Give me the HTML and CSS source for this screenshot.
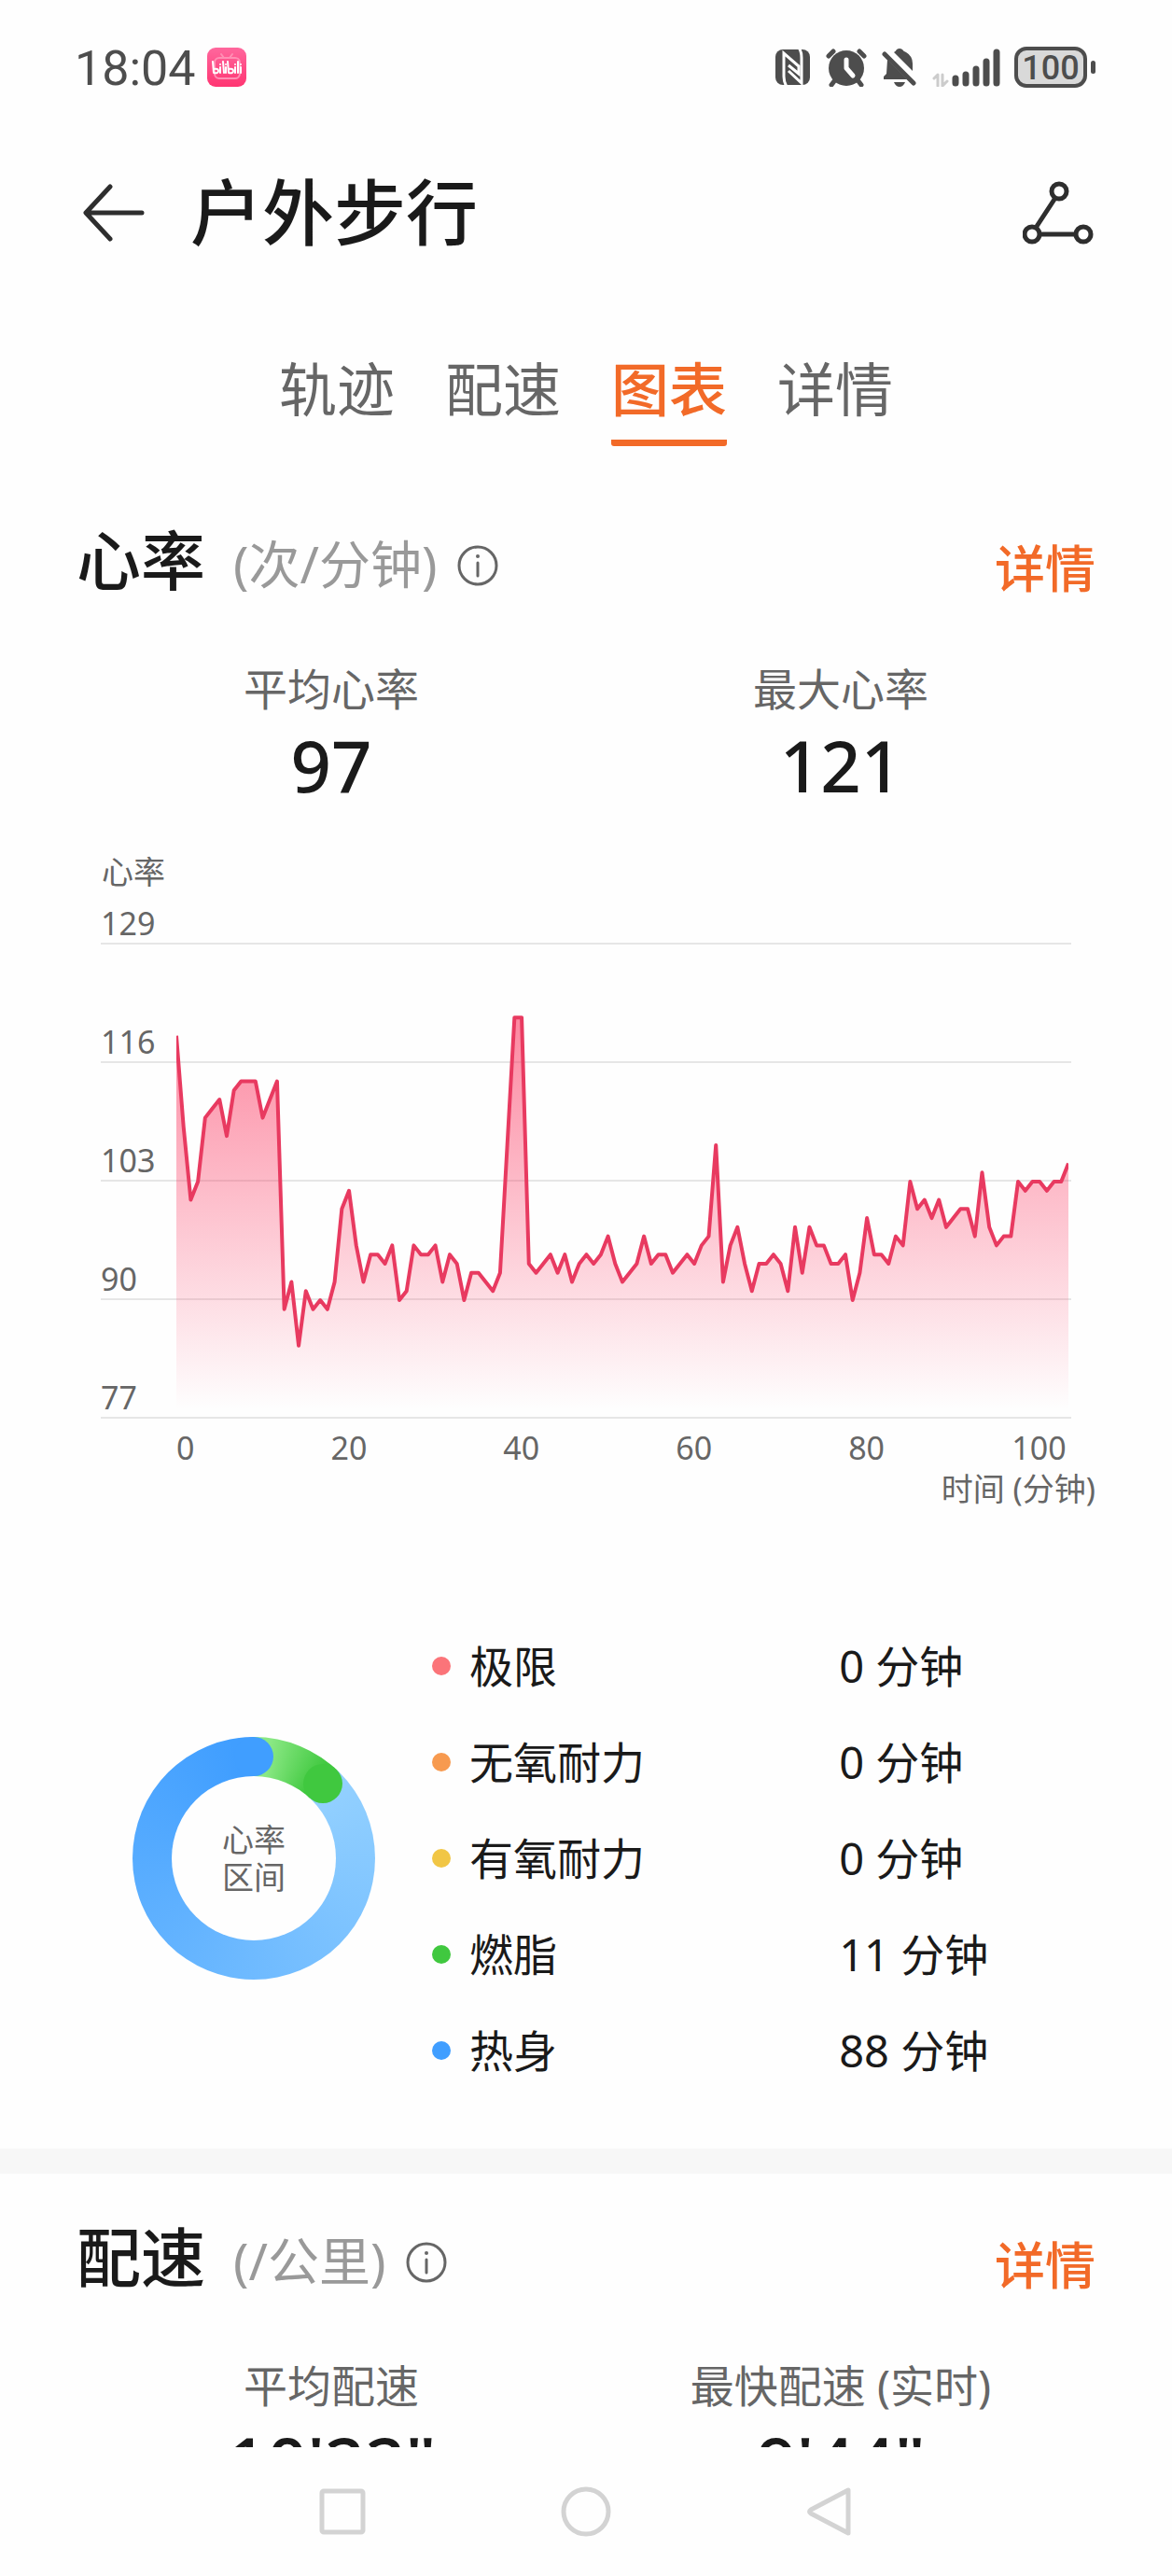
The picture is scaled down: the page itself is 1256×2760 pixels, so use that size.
FILE: index.html
```html
<!DOCTYPE html>
<html lang="zh-CN">
<head>
  <meta charset="UTF-8">
  <meta name="viewport" content="width=device-width, initial-scale=1">
  <title>户外步行</title>
  <link rel="stylesheet" href="styles.css">
</head>
<body>
<div class="screen">

  <!-- Status bar -->
  <div class="status-bar">
    <span class="clock">18:04</span>
    <svg class="app-badge" viewBox="0 0 42 42" width="42" height="42" aria-hidden="true">
      <defs>
        <linearGradient id="badgeFill" x1="0" y1="0" x2="0" y2="1">
          <stop offset="0" stop-color="#ff679d"/>
          <stop offset="1" stop-color="#ff3572"/>
        </linearGradient>
      </defs>
      <rect width="42" height="42" rx="9" fill="url(#badgeFill)"/>
      <g fill="none" stroke="#ff8fb4" stroke-width="2" stroke-linecap="round">
        <rect x="8" y="11" width="27" height="22" rx="5"/>
        <path d="M15 7l3 4M27 7l-3 4"/>
      </g>
      <g fill="none" stroke="#fff" stroke-width="2" stroke-linecap="round" stroke-linejoin="round">
        <path d="M6 15l1 12q5 1 5-2t-5-2M14 21v6M17 15l1 12M20 21v6M22 15l1 12q5 1 5-2t-5-2M30 21v6M33 15v12M36 21v6"/>
        <path d="M14 18v0M20 18v0M30 18v0M36 18v0"/>
      </g>
    </svg>
    <div class="status-icons">
      <svg viewBox="0 0 38 40" width="38" height="40" aria-hidden="true">
        <rect x="0" y="1" width="37" height="38" rx="8" fill="#4d4d4d"/>
        <path d="M12 41Q9 36 9 30V5L25 19V27L14 18" fill="none" stroke="#fff" stroke-width="3"/>
        <path d="M14 24L28 37V10Q28 3 25 -1" fill="none" stroke="#fff" stroke-width="3"/>
      </svg>
      <svg class="icon-alarm" viewBox="0 0 44 42" width="44" height="42" aria-hidden="true">
        <circle cx="22" cy="22" r="19" fill="#4d4d4d"/>
        <path d="M3 9l5-5M41 9l-5-5M9 36l-3 4M35 36l3 4" stroke="#4d4d4d" stroke-width="5" stroke-linecap="round"/>
        <path d="M22 13v9l7 8" fill="none" stroke="#fff" stroke-width="5" stroke-linecap="round" stroke-linejoin="round"/>
      </svg>
      <svg class="icon-bell" viewBox="0 0 38 42" width="38" height="42" aria-hidden="true">
        <path d="M6 13L27 34H2V31L5 28Z" fill="#4d4d4d"/>
        <path d="M13 5Q15 4 16 2Q19 0 22 2Q23 4 26 5Q33 9 33 17V25Z" fill="#4d4d4d"/>
        <path d="M3 7L34 38" stroke="#4d4d4d" stroke-width="5" stroke-linecap="round"/>
        <path d="M13 37H25Q23 42 19 42T13 37Z" fill="#4d4d4d"/>
      </svg>
      <svg class="icon-signal" viewBox="0 0 74 42" width="74" height="42" aria-hidden="true">
        <path d="M2 33l4-4v12M11 29v12l5-5" fill="none" stroke="#ccc" stroke-width="3" stroke-linejoin="round" stroke-linecap="round"/>
        <path d="M25 33v5M36 29v9M47 23v15M58 15v23M69 5v33" stroke="#4d4d4d" stroke-width="7" stroke-linecap="round"/>
      </svg>
      <span class="battery">100</span>
    </div>
  </div>

  <!-- Title bar -->
  <header class="title-bar">
    <button class="icon-button" type="button" aria-label="返回">
      <svg viewBox="0 0 68 64" width="68" height="64">
        <path d="M30 4L4 32L30 60M5 32H64" fill="none" stroke="#2e2e2e" stroke-width="5" stroke-linecap="round" stroke-linejoin="round"/>
      </svg>
    </button>
    <h1>户外步行</h1>
    <button class="icon-button" type="button" aria-label="分享">
      <svg viewBox="0 0 76 68" width="76" height="68">
        <g fill="none" stroke="#2e2e2e" stroke-width="5">
          <circle cx="39" cy="11" r="8"/>
          <circle cx="10" cy="57" r="8"/>
          <circle cx="65" cy="57" r="8"/>
          <path d="M35 18L14 50M18 57H57"/>
        </g>
      </svg>
    </button>
  </header>

  <!-- Tabs -->
  <nav class="tabs">
    <a href="#">轨迹</a>
    <a href="#">配速</a>
    <a href="#" class="active" aria-current="page">图表</a>
    <a href="#">详情</a>
  </nav>

  <main class="content">

    <!-- Heart rate -->
    <section class="card">
      <div class="card-head">
        <h2>心率</h2>
        <span class="unit">(次/分钟)</span>
        <button class="icon-button" type="button" aria-label="说明">
          <svg viewBox="0 0 44 44" width="44" height="44">
            <circle cx="22" cy="22" r="20" fill="none" stroke="#666" stroke-width="3"/>
            <path d="M22 19v14" stroke="#666" stroke-width="3" stroke-linecap="round"/>
            <circle cx="22" cy="12" r="2" fill="#666"/>
          </svg>
        </button>
        <a class="more" href="#">详情</a>
      </div>

      <div class="stats">
        <div class="stat"><span>平均心率</span><strong>97</strong></div>
        <div class="stat"><span>最大心率</span><strong>121</strong></div>
      </div>

      <div class="chart">
        <div class="chart-title">心率</div>
        <div class="plot">
          <div class="grid-row first">129</div>
          <div class="grid-row">116</div>
          <div class="grid-row">103</div>
          <div class="grid-row">90</div>
          <div class="grid-row">77</div>
          <!-- one unit per sample across, one unit per bpm down (129 to 77) -->
          <svg class="plot-line" viewBox="0 0 124 52" preserveAspectRatio="none" aria-hidden="true">
            <defs>
              <linearGradient id="hrFill" gradientUnits="userSpaceOnUse" x1="0" y1="8" x2="0" y2="51">
                <stop offset="0" stop-color="#fb2c57" stop-opacity="0.56"/>
                <stop offset="1" stop-color="#fb2c57" stop-opacity="0"/>
              </linearGradient>
            </defs>
            <polygon id="hrArea" fill="url(#hrFill)"/>
            <polyline id="hrLine"/>
          </svg>
        </div>
        <div class="x-axis">
          <span>0</span><span>20</span><span>40</span><span>60</span><span>80</span><span>100</span>
        </div>
        <div class="x-title">时间 (分钟)</div>
      </div>

      <div class="zones">
        <div class="ring">
          <div class="ring-label">心率<br>区间</div>
        </div>
        <table class="zone-table">
          <tr><th scope="row"><i class="dot extreme"></i>极限</th><td>0 分钟</td></tr>
          <tr><th scope="row"><i class="dot anaerobic"></i>无氧耐力</th><td>0 分钟</td></tr>
          <tr><th scope="row"><i class="dot aerobic"></i>有氧耐力</th><td>0 分钟</td></tr>
          <tr><th scope="row"><i class="dot fat-burn"></i>燃脂</th><td>11 分钟</td></tr>
          <tr><th scope="row"><i class="dot warm-up"></i>热身</th><td>88 分钟</td></tr>
        </table>
      </div>
    </section>

    <!-- Pace -->
    <section class="card">
      <div class="card-head">
        <h2>配速</h2>
        <span class="unit">(/公里)</span>
        <button class="icon-button" type="button" aria-label="说明">
          <svg viewBox="0 0 44 44" width="44" height="44">
            <circle cx="22" cy="22" r="20" fill="none" stroke="#666" stroke-width="3"/>
            <path d="M22 19v14" stroke="#666" stroke-width="3" stroke-linecap="round"/>
            <circle cx="22" cy="12" r="2" fill="#666"/>
          </svg>
        </button>
        <a class="more" href="#">详情</a>
      </div>
      <div class="stats">
        <div class="stat"><span>平均配速</span><strong>10'22"</strong></div>
        <div class="stat"><span>最快配速 (实时)</span><strong>9'44"</strong></div>
      </div>
    </section>
  </main>

  <!-- System navigation -->
  <footer class="system-nav">
    <button class="icon-button" type="button" aria-label="最近任务">
      <svg viewBox="0 0 54 54" width="54" height="54"><rect x="5" y="5" width="44" height="44" rx="2"/></svg>
    </button>
    <button class="icon-button" type="button" aria-label="主屏幕">
      <svg viewBox="0 0 54 54" width="54" height="54"><circle cx="27" cy="27" r="24"/></svg>
    </button>
    <button class="icon-button" type="button" aria-label="返回上一级">
      <svg viewBox="0 0 54 54" width="54" height="54"><path d="M47 4V50L7 29Q4 27 7 25Z"/></svg>
    </button>
  </footer>
</div>

<script>
  const heartRate = [
    119, 109, 101, 103, 110, 111, 112, 108, 113, 114, 114, 114, 110, 112, 114, 89, 92, 85, 91, 89,
    90, 89, 92, 100, 102, 96, 92, 95, 95, 94, 96, 90, 91, 96, 95, 95, 96, 92, 95, 94,
    90, 93, 93, 92, 91, 93, 107, 121, 121, 94, 93, 94, 95, 93, 95, 92, 94, 95, 94, 95,
    97, 94, 92, 93, 94, 97, 94, 95, 95, 93, 94, 95, 94, 96, 97, 107, 92, 96, 98, 94,
    91, 94, 94, 95, 94, 91, 98, 93, 98, 96, 96, 94, 94, 95, 90, 93, 99, 95, 95, 94,
    97, 96, 103, 100, 101, 99, 101, 98, 99, 100, 100, 97, 104, 98, 96, 97, 97, 103, 102, 103,
    103, 102, 103, 103, 105
  ];
  const points = heartRate.map((bpm, i) => `${i},${129 - bpm}`).join(" ");
  document.getElementById("hrLine").setAttribute("points", points);
  document.getElementById("hrArea").setAttribute("points", `0,52 ${points} 124,52`);
</script>
</body>
</html>
```
FILE: styles.css
```css
* {
  box-sizing: border-box;
}
body {
  margin: 0;
  font-family: "Noto Sans", "Noto Sans CJK SC", sans-serif;
  background: #fefefe;
  color: #1a1a1a;
}
a {
  text-decoration: none;
}
svg {
  display: block;
}
.icon-button {
  padding: 0;
  border: 0;
  background: none;
}

/* The page fills the window, the content is cut off by the system bar */
.screen {
  display: flex;
  flex-direction: column;
  height: 100vh;
}

/* Status bar */
.status-bar {
  display: flex;
  align-items: center;
  height: 144px;
  padding: 0 82px 0 80px;
  color: #4d4d4d;
}
.clock {
  padding-top: 4px;
  font-family: Roboto, sans-serif;
  font-size: 52px;
  line-height: 60px;
}
.app-badge {
  margin-left: 12px;
}
.status-icons {
  display: flex;
  align-items: center;
  margin-left: auto;
}
.icon-alarm,
.icon-bell,
.icon-signal {
  margin-left: 16px;
}
.battery {
  position: relative;
  width: 78px;
  height: 44px;
  margin: 0 9px 0 14px;
  border: 4px solid #4d4d4d;
  border-radius: 13px;
  background: #d9d9d9;
  font-family: Roboto, sans-serif;
  font-size: 36px;
  font-weight: 500;
  line-height: 38px;
  text-align: center;
}
.battery::after {
  content: "";
  position: absolute;
  top: 11px;
  right: -13px;
  width: 5px;
  height: 14px;
  border-radius: 3px;
  background: #4d4d4d;
}

/* Title bar */
.title-bar {
  display: flex;
  align-items: center;
  height: 168px;
  padding: 0 84px 0 88px;
}
.title-bar h1 {
  flex: 1;
  margin: 0 0 0 48px;
  font-size: 77px;
  font-weight: 500;
  line-height: 88px;
}

/* Tabs */
.tabs {
  display: flex;
  justify-content: center;
  gap: 54px;
  padding-top: 68px;
}
.tabs a {
  height: 98px;
  color: #666;
  font-size: 62px;
  line-height: 74px;
}
.tabs .active {
  border-bottom: 7px solid #f26a28;
  border-radius: 3px;
  color: #f26a28;
  font-weight: 500;
}

.content {
  flex: 1;
  min-height: 0;
  overflow: hidden;
}
.card {
  padding: 74px 82px 0;
}
.card + .card {
  padding-top: 41px;
  border-top: 27px solid #f7f7f7;
}
.card-head {
  display: flex;
  align-items: center;
  height: 96px;
}
.card-head h2 {
  margin: 0;
  font-size: 69px;
  font-weight: 500;
  line-height: 96px;
}
.unit {
  margin: 8px 22px 0 30px;
  color: #999;
  font-size: 55px;
  line-height: 64px;
}
.card-head .icon-button {
  margin-top: 12px;
}
.more {
  margin: 18px 0 0 auto;
  color: #f26a28;
  font-size: 54px;
  font-weight: 500;
  line-height: 64px;
}

/* Average and peak values */
.stats {
  display: grid;
  grid-template-columns: 1fr 1fr;
  margin-top: 60px;
  text-align: center;
}
.stat span,
.stat strong {
  display: block;
}
.stat span {
  color: #666;
  font-size: 47px;
  line-height: 60px;
}
.stat strong {
  font-size: 76px;
  font-weight: 500;
  line-height: 104px;
}

/* Heart rate chart */
.chart {
  margin-top: 40px;
  color: #666;
  font-size: 34px;
}
.chart-title {
  padding-left: 27px;
  line-height: 44px;
}
.plot {
  position: relative;
  margin: 0 26px;
}
.grid-row {
  display: flex;
  align-items: flex-end;
  height: 127px;
  padding-bottom: 3px;
  border-bottom: 2px solid #e6e6e6;
  line-height: 36px;
}
.grid-row.first {
  height: 56px;
}
.plot-line {
  position: absolute;
  top: 56px;
  left: 81px;
  width: calc(100% - 84px);
  height: calc(100% - 56px);
}
.plot-line polyline {
  fill: none;
  stroke: #e83a60;
  stroke-width: 4px;
  stroke-linejoin: round;
  vector-effect: non-scaling-stroke;
}
.x-axis {
  display: grid;
  grid-template-columns: 1fr 2fr 2fr 2fr 2fr 2fr;
  margin: 9px -32px 0 107px;
  line-height: 44px;
  text-align: center;
}
.x-axis span:first-child {
  text-align: left;
}
.x-title {
  line-height: 44px;
  text-align: right;
}

/* Heart rate zones */
.zones {
  display: flex;
  align-items: center;
  margin-top: 116px;
  padding: 0 60px 54px;
}
.ring {
  position: relative;
  display: flex;
  align-items: center;
  justify-content: center;
  width: 260px;
  height: 260px;
  border-radius: 50%;
  background: conic-gradient(#8ae884 8deg, #40c83f 38deg, #40c83f 43deg, #94d1ff 43deg, #409eff 350deg);
}
.ring::before,
.ring::after {
  content: "";
  position: absolute;
  width: 42px;
  height: 42px;
  border-radius: 50%;
}
.ring::before {
  top: 29px;
  left: 183px;
  background: #40c83f;
}
.ring::after {
  top: 0;
  left: 109px;
  background: #409eff;
}
.ring-label {
  width: 176px;
  height: 176px;
  padding-top: 48px;
  border-radius: 50%;
  background: #fefefe;
  color: #666;
  font-size: 34px;
  line-height: 40px;
  text-align: center;
}
.zone-table {
  flex: 1;
  margin-left: 61px;
  border-collapse: collapse;
  font-size: 47px;
  line-height: 60px;
  text-align: left;
}
.zone-table th,
.zone-table td {
  height: 103px;
  padding: 0;
  font-weight: 400;
}
.zone-table th {
  width: 67%;
}
.dot {
  display: inline-block;
  width: 20px;
  height: 20px;
  margin-right: 20px;
  border-radius: 50%;
  vertical-align: 8px;
}
.extreme {
  background: #fb7479;
}
.anaerobic {
  background: #f79a4f;
}
.aerobic {
  background: #f1c645;
}
.fat-burn {
  background: #40c83f;
}
.warm-up {
  background: #409eff;
}

/* System navigation */
.system-nav {
  display: flex;
  align-items: center;
  justify-content: center;
  gap: 207px;
  height: 138px;
}
.system-nav svg {
  fill: none;
  stroke: #d3d3d3;
  stroke-width: 5px;
  stroke-linejoin: round;
}
```
